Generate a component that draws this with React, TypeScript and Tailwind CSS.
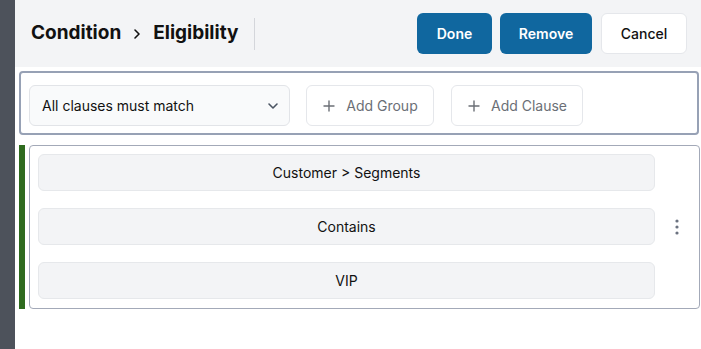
import React from "react";

function Plus() {
  return (
    <svg width="14" height="14" viewBox="0 0 14 14" fill="none" stroke="currentColor" strokeWidth="1.4" strokeLinecap="round">
      <path d="M7 2v10M2 7h10" />
    </svg>
  );
}

export default function App() {
  const rows = ["Customer > Segments", "Contains", "VIP"];
  return (
    <div className="flex w-[701px] h-[349px] bg-white" style={{ fontFamily: "Inter, 'Noto Sans', sans-serif" }}>
      <div className="w-[15px] shrink-0 bg-[#4d525b]" />
      <div className="flex-1 flex flex-col">
        <div className="h-[67px] bg-[#f3f4f6] flex items-center pl-4 pr-[14px]">
          <div className="flex items-center text-[19px] font-bold text-[#111]">
            <span>Condition</span>
            <svg className="mx-[11px]" width="10" height="12" viewBox="0 0 10 12" fill="none" stroke="#111" strokeWidth="1.6" strokeLinecap="round" strokeLinejoin="round">
              <path d="M3 2l4 4-4 4" />
            </svg>
            <span>Eligibility</span>
          </div>
          <div className="ml-4 w-px h-[32px] bg-[#d4d6db]" />
          <div className="ml-auto flex items-center">
            <button className="w-[75px] h-[41px] rounded-[6px] bg-[#10679f] text-white text-[14px] font-semibold">Done</button>
            <button className="ml-2 w-[92px] h-[41px] rounded-[6px] bg-[#10679f] text-white text-[14px] font-semibold">Remove</button>
            <button className="ml-[9px] w-[86px] h-[41px] rounded-[6px] bg-white border border-[#e5e7eb] text-[#111] text-[14px] font-medium">Cancel</button>
          </div>
        </div>
        <div className="mt-1 ml-1 mr-[2px] border-2 border-[#97a1b5] rounded-[4px] pl-2 pt-3 pb-[7px] flex items-center">
          <div className="w-[261px] h-[41px] rounded-[6px] border border-[#e2e4e8] bg-[#f9fafb] flex items-center pl-3 pr-[10px] text-[14px] text-[#111]">
            <span>All clauses must match</span>
            <svg className="ml-auto" width="12" height="8" viewBox="0 0 12 8" fill="none" stroke="#4b5563" strokeWidth="1.6" strokeLinecap="round" strokeLinejoin="round">
              <path d="M2 2l4 4 4-4" />
            </svg>
          </div>
          <button className="ml-4 w-[128px] h-[41px] rounded-[6px] border border-[#e5e7eb] bg-white flex items-center justify-center gap-[10px] text-[14px] text-[#6b6f76]">
            <Plus />
            <span>Add Group</span>
          </button>
          <button className="ml-[17px] w-[132px] h-[41px] rounded-[6px] border border-[#e5e7eb] bg-white flex items-center justify-center gap-[10px] text-[14px] text-[#6b6f76]">
            <Plus />
            <span>Add Clause</span>
          </button>
        </div>
        <div className="mt-[10px] ml-1 mr-[1px] flex">
          <div className="w-[6px] bg-[#2f6b1f]" />
          <div className="ml-1 flex-1 border border-[#a3a9b8] rounded-[4px] flex items-center pl-2 pt-2 pb-[9px]">
            <div className="flex-1 flex flex-col gap-[17px]">
              {rows.map((r) => (
                <div key={r} className="h-[37px] rounded-[6px] border border-[#e6e8eb] bg-[#f3f4f6] flex items-center justify-center text-[14px] text-[#111]">
                  {r}
                </div>
              ))}
            </div>
            <div className="w-[44px] flex justify-center">
              <svg width="4" height="16" viewBox="0 0 4 16" fill="#6b7280">
                <circle cx="2" cy="2" r="1.6" />
                <circle cx="2" cy="8" r="1.6" />
                <circle cx="2" cy="14" r="1.6" />
              </svg>
            </div>
          </div>
        </div>
      </div>
    </div>
  );
}
